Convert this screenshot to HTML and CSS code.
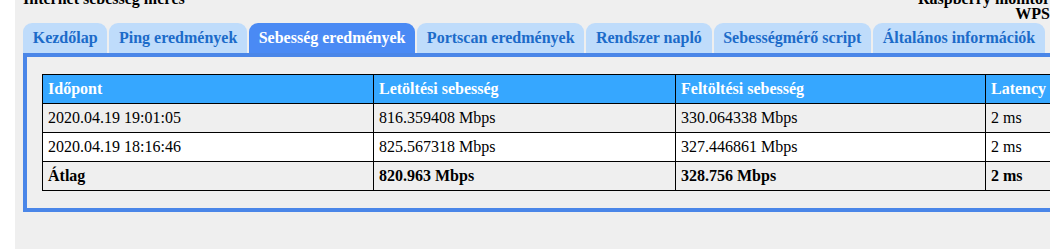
FILE: index.html
```html
<!DOCTYPE html>
<html lang="hu">
<head>
<meta charset="utf-8">
<title>Sebesség eredmények</title>
<link rel="stylesheet" href="styles.css">
</head>
<body>
<div class="page">
  <div class="header">
    <div class="header-left">Internet sebesség mérés</div>
    <div class="header-right">Raspberry monitor<br>WPS</div>
  </div>
  <div class="tabs">
    <div class="tab">Kezdőlap</div>
    <div class="tab">Ping eredmények</div>
    <div class="tab active">Sebesség eredmények</div>
    <div class="tab">Portscan eredmények</div>
    <div class="tab">Rendszer napló</div>
    <div class="tab">Sebességmérő script</div>
    <div class="tab">Általános információk</div>
  </div>
  <div class="panel">
    <table class="results">
      <thead>
        <tr>
          <th class="c1">Időpont</th>
          <th class="c2">Letöltési sebesség</th>
          <th class="c3">Feltöltési sebesség</th>
          <th class="c4">Latency</th>
        </tr>
      </thead>
      <tbody>
        <tr class="odd">
          <td>2020.04.19 19:01:05</td>
          <td>816.359408 Mbps</td>
          <td>330.064338 Mbps</td>
          <td>2 ms</td>
        </tr>
        <tr class="even">
          <td>2020.04.19 18:16:46</td>
          <td>825.567318 Mbps</td>
          <td>327.446861 Mbps</td>
          <td>2 ms</td>
        </tr>
        <tr class="odd avg">
          <td>Átlag</td>
          <td>820.963 Mbps</td>
          <td>328.756 Mbps</td>
          <td>2 ms</td>
        </tr>
      </tbody>
    </table>
  </div>
</div>
</body>
</html>
```
FILE: styles.css
```css
html, body {
  margin: 0;
  padding: 0;
  background: #ffffff;
  overflow: hidden;
}
body {
  font-family: "Liberation Serif", "Times New Roman", serif;
  font-size: 16px;
  color: #000;
}
.page {
  margin-left: 15px;
  width: 1160px;
  min-height: 260px;
  background: #efefef;
  padding: 0 8px;
  box-sizing: border-box;
}
.header {
  display: flex;
  justify-content: space-between;
  align-items: flex-start;
  margin-top: -9px;
  font-weight: bold;
  line-height: 15px;
  width: 1027px;
}
.header-left {
  white-space: nowrap;
}
.header-right {
  text-align: right;
  white-space: nowrap;
}
.tabs {
  display: flex;
  gap: 2px;
  margin-top: 2px;
}
.tab {
  height: 30px;
  line-height: 30px;
  padding: 0 9.7px;
  background: #bfdcfb;
  color: #1c6bc9;
  font-weight: bold;
  border-radius: 9px 9px 0 0;
  white-space: nowrap;
}
.tab.active {
  background: #4a8af4;
  color: #ffffff;
}
.panel {
  border: 4px solid #4a86e8;
  border-right: none;
  padding: 17px 0 17px 15px;
}
.results {
  border-collapse: collapse;
  table-layout: fixed;
  width: 1100px;
}
.results th, .results td {
  border: 1px solid #000;
  height: 28px;
  padding: 0 5px;
  text-align: left;
  white-space: nowrap;
}
.results th {
  background: #36a7ff;
  color: #ffffff;
  font-weight: bold;
}
.c1 { width: 320px; }
.c2 { width: 291px; }
.c3 { width: 299px; }
.c4 { width: 150px; }
.odd td { background: #efefef; }
.even td { background: #ffffff; }
.avg td { font-weight: bold; }
```
